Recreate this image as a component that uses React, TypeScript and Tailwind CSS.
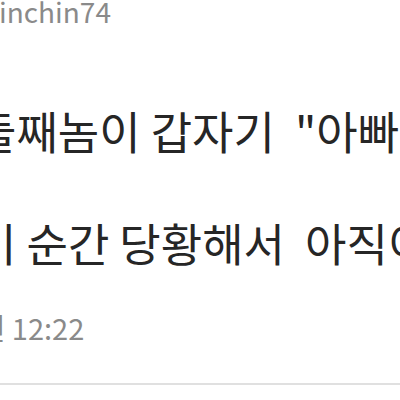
export default function App() {
  const kr = { fontFamily: '"Noto Sans CJK KR", "Noto Sans", sans-serif' }
  return (
    <div className="w-[400px] h-[400px] overflow-hidden bg-white flex flex-col" style={kr}>
      <div className="text-[28px] leading-[28px] text-[#8a8a8a] mt-[-3px] ml-[-1px] whitespace-nowrap">
        inchin74
      </div>
      <div className="mt-[83px] ml-[-25px] text-[45px] leading-[45px] text-[#262626] whitespace-nowrap">
        둘째놈이 갑자기 &nbsp;"아빠
      </div>
      <div className="mt-[67px] ml-[-25px] text-[45px] leading-[45px] text-[#262626] whitespace-nowrap">
        이 순간 당황해서 &nbsp;아직이
      </div>
      <div className="mt-[48px] ml-[-48px] text-[29px] leading-[29px] text-[#8a8a8a] whitespace-nowrap">
        오전 12:22
      </div>
      <div className="mt-[41px] h-[2px] bg-[#e0e0e0]" />
    </div>
  )
}
